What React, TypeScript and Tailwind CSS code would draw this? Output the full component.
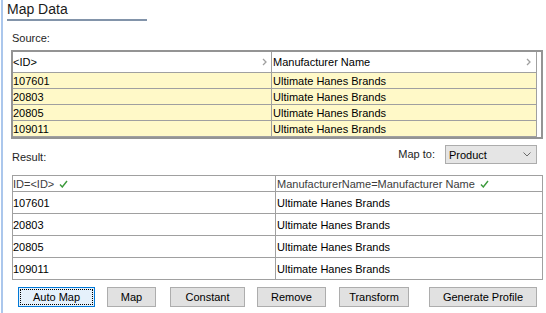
import React from "react";

const Chevron = () => (
  <svg width="5" height="8" viewBox="0 0 5 8" className="shrink-0">
    <polyline points="1,1 4,4 1,7" fill="none" stroke="#a0a0a0" strokeWidth="1.3" />
  </svg>
);

const Check = () => (
  <svg width="9" height="8" viewBox="0 0 9 8" className="shrink-0 ml-[5px]">
    <polyline points="1,4.5 3.3,7 8,1" fill="none" stroke="#3b9a3b" strokeWidth="1.4" />
  </svg>
);

const ids = ["107601", "20803", "20805", "109011"];
const name = "Ultimate Hanes Brands";

export default function App() {
  return (
    <div className="w-[546px] h-[313px] bg-white flex overflow-hidden text-[11px] text-black font-['Liberation_Sans',Arial,sans-serif]">
      <div className="w-px shrink-0" />
      <div className="w-[2px] shrink-0 bg-[#abc7ec]" />
      <div className="flex-1 flex flex-col">
        {/* Title */}
        <div className="h-[19px] pl-[4px] pt-[1px] text-[14px] leading-[17px] text-[#1b1b1b]">Map Data</div>
        <div className="ml-[4px] w-[140px] h-[2px] bg-[#8294aa]" />

        {/* Source */}
        <div className="mt-[10px] pl-[9px] h-[14px] leading-[14px] text-[#1e1e1e]">Source:</div>
        <div className="mt-[5px] ml-[8px] w-[532px] h-[89px] border-2 border-[#949494] flex flex-col">
          <div className="flex h-[21px] bg-white">
            <div className="w-[259px] border-b border-r border-[#a0a0a0] flex items-center justify-between pr-[4px] leading-[14px]">
              <span>&lt;ID&gt;</span>
              <Chevron />
            </div>
            <div className="w-[265px] border-b border-r border-[#a0a0a0] flex items-center justify-between pl-[1px] pr-[5px] leading-[14px]">
              <span>Manufacturer Name</span>
              <Chevron />
            </div>
          </div>
          {ids.map((id) => (
            <div key={id} className="flex h-[16px]">
              <div className="w-[259px] bg-[#fff9c8] border-b border-r border-[#a0a0a0] flex items-center leading-[14px]">{id}</div>
              <div className="w-[265px] bg-[#fff9c8] border-b border-r border-[#a0a0a0] flex items-center pl-[1px] leading-[14px]">{name}</div>
            </div>
          ))}
        </div>

        {/* Result header row */}
        <div className="mt-[6px] h-[19px] flex items-start">
          <div className="pl-[9px] mt-[5px] leading-[14px] text-[#1e1e1e]">Result:</div>
          <div className="ml-auto mt-[2px] leading-[14px] text-[#1e1e1e]">Map to:</div>
          <div className="ml-[10px] mr-[9px] w-[92px] h-[19px] bg-[#e5e5e5] border border-[#acacac] flex items-center justify-between pl-[3px] pr-[5px]">
            <span className="leading-[14px]">Product</span>
            <svg width="8" height="5" viewBox="0 0 8 5">
              <polyline points="0.5,0.5 4,4 7.5,0.5" fill="none" stroke="#6a6a6a" strokeWidth="1" />
            </svg>
          </div>
        </div>

        {/* Result table */}
        <div className="mt-[11px] ml-[9px] w-[531px] border border-[#a0a0a0] flex flex-col">
          <div className="flex h-[16px] border-b border-[#a0a0a0] text-[#3c3c3c]">
            <div className="w-[263px] border-r border-[#a0a0a0] flex items-center leading-[14px]">
              <span>ID=&lt;ID&gt;</span>
              <Check />
            </div>
            <div className="flex-1 flex items-center pl-[1px] leading-[14px]">
              <span>ManufacturerName=Manufacturer Name</span>
              <Check />
            </div>
          </div>
          {ids.map((id, i) => (
            <div key={id} className={i < 3 ? "flex h-[22px] border-b border-[#a0a0a0]" : "flex h-[21px]"}>
              <div className="w-[263px] border-r border-[#a0a0a0] flex items-center leading-[14px]">{id}</div>
              <div className="flex-1 flex items-center pl-[1px] leading-[14px]">{name}</div>
            </div>
          ))}
        </div>

        {/* Buttons */}
        <div className="mt-[7px] flex h-[20px]">
          <button className="ml-[15px] w-[77px] h-[20px] bg-[#e5f1fb] border border-[#0078d7] p-[1px] flex">
            <div className="flex-1 border border-dotted border-[#000] flex items-center justify-center leading-[14px]">Auto Map</div>
          </button>
          <button className="ml-[12px] w-[49px] h-[20px] bg-[#e1e1e1] border border-[#adadad] flex items-center justify-center leading-[14px]">Map</button>
          <button className="ml-[14px] w-[75px] h-[20px] bg-[#e1e1e1] border border-[#adadad] flex items-center justify-center leading-[14px]">Constant</button>
          <button className="ml-[12px] w-[69px] h-[20px] bg-[#e1e1e1] border border-[#adadad] flex items-center justify-center leading-[14px]">Remove</button>
          <button className="ml-[13px] w-[70px] h-[20px] bg-[#e1e1e1] border border-[#adadad] flex items-center justify-center leading-[14px]">Transform</button>
          <button className="ml-[20px] w-[108px] h-[20px] bg-[#e1e1e1] border border-[#adadad] flex items-center justify-center leading-[14px]">Generate Profile</button>
        </div>
      </div>
    </div>
  );
}
